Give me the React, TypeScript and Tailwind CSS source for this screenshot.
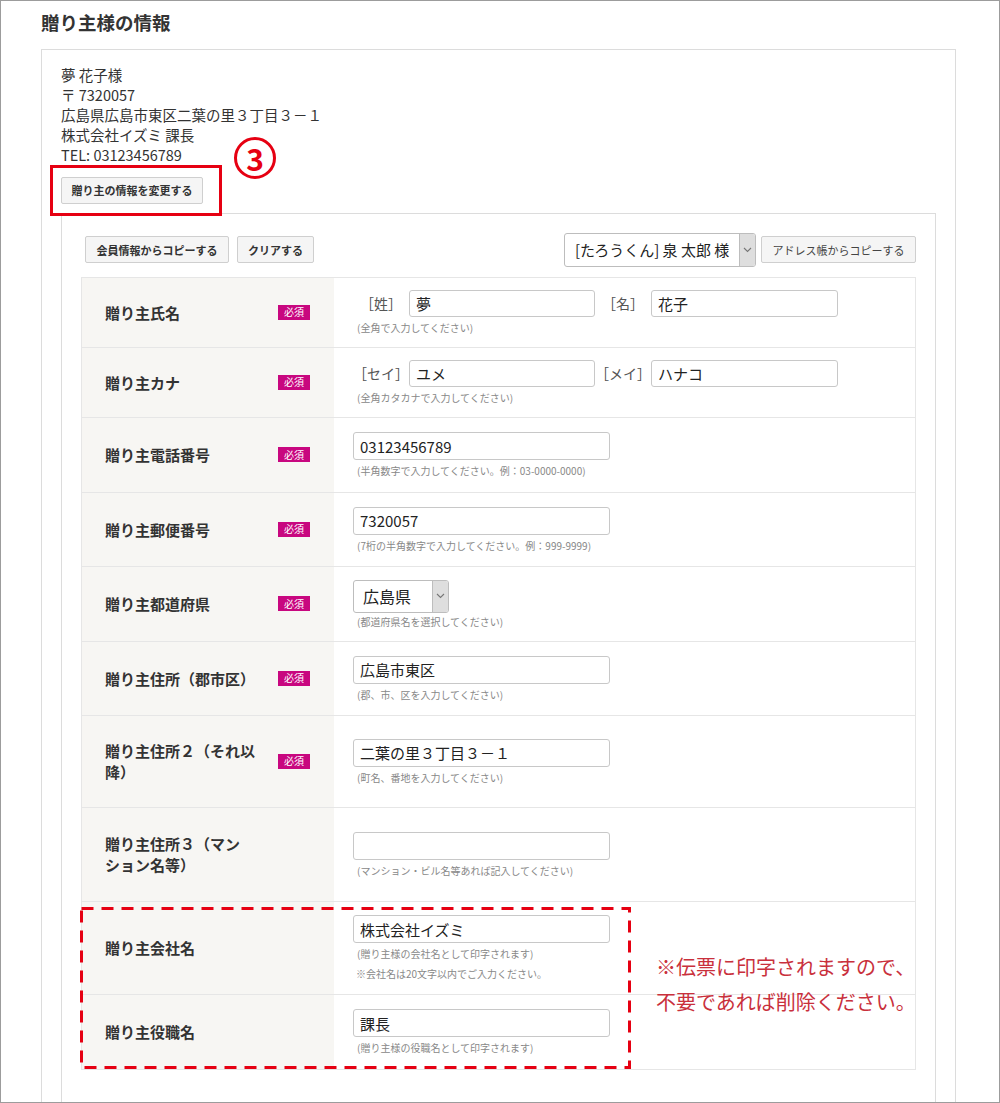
import React from "react";

// Form row definitions
interface Row {
  label: React.ReactNode;
  required?: boolean;
  height: string;
  body: React.ReactNode;
}

const Badge: React.FC = () => (
  <span className="flex h-[15px] w-[32px] shrink-0 items-center justify-center bg-[#c8077f] text-[10px] leading-none text-white">
    必須
  </span>
);

const Hint: React.FC<{ children: React.ReactNode; className?: string }> = ({ children, className }) => (
  <div className={`pl-[4px] text-[10px] leading-[12px] text-[#888] ${className ?? "mt-[5px]"}`}>{children}</div>
);

const TextInput: React.FC<{ value?: string; w?: string }> = ({ value = "", w = "w-[257px]" }) => (
  <input
    readOnly
    value={value}
    className={`${w} h-[28px] rounded-[3px] border border-[#c8c8c8] bg-white px-[6px] text-[15px] text-[#222] outline-none`}
  />
);

const Chevron: React.FC = () => (
  <svg width="9" height="6" viewBox="0 0 9 6" fill="none">
    <path d="M1 1l3.5 3.5L8 1" stroke="#777" strokeWidth="1.1" />
  </svg>
);

const FakeSelect: React.FC<{ text: string; w: string; h: string; textCls: string }> = ({ text, w, h, textCls }) => (
  <div className={`${w} ${h} flex overflow-hidden rounded-[3px] border border-[#bdbdbd] bg-white`}>
    <div className={`flex flex-1 items-center ${textCls} text-[#222]`}>{text}</div>
    <div className="flex w-[16px] items-center justify-center border-l border-[#bdbdbd] bg-[#dedede]">
      <Chevron />
    </div>
  </div>
);

const Label2: React.FC<{ tag: string; children: React.ReactNode }> = ({ tag, children }) => (
  <>
    <span className="w-[56px] text-center text-[14px] text-[#555]">{tag}</span>
    {children}
  </>
);

const rows: Row[] = [
  {
    label: "贈り主氏名",
    required: true,
    height: "h-[70px]",
    body: (
      <>
        <div className="flex items-center">
          <Label2 tag="［姓］"><TextInput value="夢" w="w-[186px] !h-[27px]" /></Label2>
          <Label2 tag="［名］"><TextInput value="花子" w="w-[187px] !h-[27px]" /></Label2>
        </div>
        <Hint>(全角で入力してください)</Hint>
      </>
    ),
  },
  {
    label: "贈り主カナ",
    required: true,
    height: "h-[70px]",
    body: (
      <>
        <div className="flex items-center">
          <Label2 tag="［セイ］"><TextInput value="ユメ" w="w-[186px] !h-[27px]" /></Label2>
          <Label2 tag="［メイ］"><TextInput value="ハナコ" w="w-[187px] !h-[27px]" /></Label2>
        </div>
        <Hint>(全角カタカナで入力してください)</Hint>
      </>
    ),
  },
  {
    label: "贈り主電話番号",
    required: true,
    height: "h-[75px]",
    body: (
      <>
        <TextInput value="03123456789" />
        <Hint>(半角数字で入力してください。例：03-0000-0000)</Hint>
      </>
    ),
  },
  {
    label: "贈り主郵便番号",
    required: true,
    height: "h-[74px]",
    body: (
      <>
        <TextInput value="7320057" />
        <Hint>(7桁の半角数字で入力してください。例：999-9999)</Hint>
      </>
    ),
  },
  {
    label: "贈り主都道府県",
    required: true,
    height: "h-[75px]",
    body: (
      <>
        <FakeSelect text="広島県" w="w-[96px]" h="h-[33px]" textCls="pl-[9px] text-[16px]" />
        <Hint className="mt-[3px]">(都道府県名を選択してください)</Hint>
      </>
    ),
  },
  {
    label: "贈り主住所（郡市区）",
    required: true,
    height: "h-[74px]",
    body: (
      <>
        <TextInput value="広島市東区" />
        <Hint>(郡、市、区を入力してください)</Hint>
      </>
    ),
  },
  {
    label: (
      <>
        贈り主住所２（それ以
        <br />
        降）
      </>
    ),
    required: true,
    height: "h-[92px]",
    body: (
      <>
        <TextInput value="二葉の里３丁目３－１" />
        <Hint>(町名、番地を入力してください)</Hint>
      </>
    ),
  },
  {
    label: (
      <>
        贈り主住所３（マン
        <br />
        ション名等）
      </>
    ),
    height: "h-[94px]",
    body: (
      <>
        <TextInput />
        <Hint>(マンション・ビル名等あれば記入してください)</Hint>
      </>
    ),
  },
];

const extraRows: Row[] = [
  {
    label: "贈り主会社名",
    height: "h-[93px]",
    body: (
      <>
        <TextInput value="株式会社イズミ" />
        <Hint>(贈り主様の会社名として印字されます)</Hint>
        <Hint className="mt-[8px] !pl-[3px]">※会社名は20文字以内でご入力ください。</Hint>
      </>
    ),
  },
  {
    label: "贈り主役職名",
    height: "h-[75px]",
    body: (
      <>
        <TextInput value="課長" />
        <Hint>(贈り主様の役職名として印字されます)</Hint>
      </>
    ),
  },
];

const FormRow: React.FC<{ row: Row }> = ({ row }) => (
  <div className={`flex ${row.height} border-t border-[#e6e6e6]`}>
    <div className="flex w-[252px] shrink-0 items-center justify-between bg-[#f7f6f3] pl-[23px] pr-[24px]">
      <div className="text-[15px] font-bold leading-[21px] text-[#333]">{row.label}</div>
      {row.required && <Badge />}
    </div>
    <div className="flex flex-1 flex-col justify-center pl-[19px]">{row.body}</div>
  </div>
);

const SmallButton: React.FC<{ children: React.ReactNode; w: string; bold?: boolean }> = ({ children, w, bold = true }) => (
  <button
    className={`${w} h-[27px] rounded-[2px] border border-[#cfcfcf] bg-[#f5f5f5] text-[11px] ${bold ? "font-bold text-[#333]" : "text-[#444]"}`}
  >
    {children}
  </button>
);

export default function App() {
  return (
    <div className="h-[1103px] w-[1000px] overflow-hidden border border-[#9c9c9c] bg-white pl-[40px] pt-[9px] font-['Noto_Sans_CJK_JP',sans-serif] text-[#333]">
      <h1 className="text-[18.5px] font-bold leading-[24px] text-[#333]">贈り主様の情報</h1>

      <div className="mt-[15px] w-[915px] border border-[#dcdcdc] pl-[19px] pr-[19px] pt-[15px]">
        <div className="text-[14.5px] leading-[20px] text-[#333]">
          <div>夢 花子様</div>
          <div>〒 7320057</div>
          <div>広島県広島市東区二葉の里３丁目３－１</div>
          <div>株式会社イズミ 課長</div>
          <div>TEL: 03123456789</div>
        </div>

        <div className="relative mt-[11px] w-fit">
          <SmallButton w="w-[142px]">贈り主の情報を変更する</SmallButton>
          {/* annotation: red frame + number */}
          <div className="pointer-events-none absolute left-[-11px] top-[-11px] h-[51px] w-[172px] border-[3px] border-[#e60012]" />
          <div className="pointer-events-none absolute left-[173px] top-[-39px] flex h-[42px] w-[42px] items-center justify-center rounded-full border-[3px] border-[#e60012] text-[30px] font-bold leading-none text-[#e60012]">
            3
          </div>
        </div>

        <div className="mt-[9px] border border-[#dcdcdc] px-[19px] pb-[60px] pt-[19px]">
          <div className="flex h-[34px] items-center pl-[4px]">
            <div className="flex gap-[8px]">
              <SmallButton w="w-[144px]">会員情報からコピーする</SmallButton>
              <SmallButton w="w-[77px]">クリアする</SmallButton>
            </div>
            <div className="ml-auto flex items-center gap-[5px]">
              <FakeSelect text="[たろうくん] 泉 太郎 様" w="w-[192px]" h="h-[34px]" textCls="pl-[10px] text-[15px]" />
              <SmallButton w="w-[155px]" bold={false}>
                アドレス帳からコピーする
              </SmallButton>
            </div>
          </div>

          <div className="mt-[10px] border-x border-b border-[#e6e6e6]">
            {rows.map((r, i) => (
              <FormRow key={i} row={r} />
            ))}
            <div className="relative">
              {extraRows.map((r, i) => (
                <FormRow key={i} row={r} />
              ))}
              <svg className="pointer-events-none absolute left-[-2px] top-[6px]" width="551" height="162">
                <rect x="1.5" y="1.5" width="548" height="159" fill="none" stroke="#e60012" strokeWidth="3" strokeDasharray="12 8" />
              </svg>
              <div className="pointer-events-none absolute left-[574px] top-[48px] whitespace-nowrap text-[20px] leading-[35px] text-[#c9303c]">
                <div>※伝票に印字されますので、</div>
                <div>不要であれば削除ください。</div>
              </div>
            </div>
          </div>
        </div>
      </div>
    </div>
  );
}
